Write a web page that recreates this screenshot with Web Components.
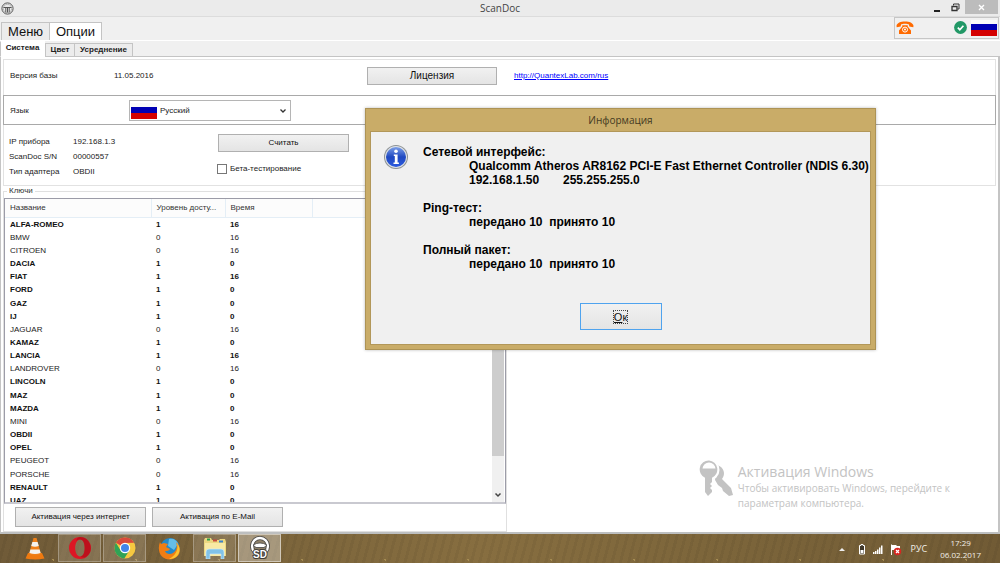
<!DOCTYPE html>
<html lang="ru">
<head>
<meta charset="utf-8">
<title>ScanDoc</title>
<style>
html, body { margin: 0; height: 100%; }
body { font: 8px/10px "Liberation Sans", Arial, sans-serif; color: #222; background: #fff; overflow: hidden; }
</style>
</head>
<body>
<scan-desktop></scan-desktop>
<script>
const UI_FONT = '"Open Sans", "Noto Sans", sans-serif';

function define(name, css, html) {
  const tpl = document.createElement('template');
  tpl.innerHTML = `<style>*{box-sizing:border-box}${css}</style>${html}`;
  customElements.define(name, class extends HTMLElement {
    constructor() {
      super();
      this.attachShadow({ mode: 'open' }).append(tpl.content.cloneNode(true));
    }
  });
}

/* Tricolour flag */
define('ru-flag', `
  :host{display:grid;grid-template-rows:4px 6px 6px;width:26px}
  i:nth-of-type(1){background:#fafafa}
  i:nth-of-type(2){background:#0000b4}
  i:nth-of-type(3){background:#d40000}`,
  `<i></i><i></i><i></i>`);

/* Push button */
define('push-button', `
  :host{display:block;height:18px}
  button{display:block;width:100%;height:100%;padding:0;border:1px solid #b0b0b0;
    background:linear-gradient(#f1f1f1,#e4e4e4);font:inherit;color:#111}
  :host([default]) button{border-color:#4fa3ee}`,
  `<button type="button"><slot></slot></button>`);

/* Window caption */
define('title-bar', `
  :host{display:grid;grid-template-columns:1fr auto 1fr;align-items:center;height:17px;
    background:#ebebeb;border-bottom:1px solid #dcdcdc;font:10px/14px ${UI_FONT};color:#444}
  .logo{display:block;margin-left:1px}
  .ctl{display:flex;justify-content:flex-end;align-self:start;margin-right:2px}
  .ctl button{height:14px;border:0;padding:0;background:none;display:grid;place-items:center}
  .min,.max{width:19px}
  .ctl .close{width:33px;background:#bcbcbc}`,
  `<svg class="logo" width="13" height="13" viewBox="0 0 13 13" fill="none" stroke="#555">
     <circle cx="6.500" cy="6.500" r="5.600" stroke-width="1"/><circle cx="6.500" cy="6.500" r="4.200" stroke="#999" stroke-width=".6"/>
     <path d="M2.500 5.500h8M6.500 5.500v5M4.800 6v4.500M8.200 6v4.500" stroke-width="1"/></svg>
   <slot></slot>
   <div class="ctl">
     <button class="min" aria-label="Свернуть"><svg width="8" height="10"><path d="M1 8h6v2H1z" fill="#222"/></svg></button>
     <button class="max" aria-label="Развернуть"><svg width="9" height="9" fill="none" stroke="#333"><path d="M2.500 2.500V1H8v5H6.500" stroke-width="1"/><path d="M1 3.500h5v4H1z" stroke-width="1.300"/></svg></button>
     <button class="close" aria-label="Закрыть"><svg width="7" height="7"><path d="M1 1l5 5M6 1L1 6" stroke="#fff" stroke-width="1.400"/></svg></button>
   </div>`);

/* Main tabs and connection status */
define('main-toolbar', `
  :host{display:flex;justify-content:space-between;align-items:flex-end;height:24px;
    background:#f0f0f0;border-bottom:1px solid #fff}
  nav{display:flex;margin-left:1px}
  nav button{height:18px;padding:0 5px;border:1px solid #c4c4c4;border-bottom:0;background:#ececec;
    font:13px/16px "Liberation Sans",sans-serif;color:#111;width:49px}
  nav button[aria-selected=true]{background:#fff;width:52px;border-left:0}
  .status{display:flex;align-items:center;align-self:flex-start;width:105px;height:22px;
    border:1px solid #c6c6c6;padding:0 1px 1px;margin-right:1px}
  .ok{margin-left:auto;margin-right:4px}`,
  `<nav role="tablist"><button role="tab">Меню</button><button role="tab" aria-selected="true">Опции</button></nav>
   <div class="status">
     <svg width="18" height="14" viewBox="0 0 18 14" aria-label="Телефон" role="img">
       <path d="M.5 4.800C1 2 4.500.5 9 .5s8 1.500 8.500 4.300l-.2 1.400-4-.6-.3-2.100C11.500 2.600 6.500 2.600 5 3.500l-.3 2.100-4 .6z" fill="#ff6a00"/>
       <path d="M6.300 4.200h5.400v1.300l3.300 4v3.500H3V9.500l3.300-4z" fill="#ff6a00"/>
       <circle cx="9" cy="8.600" r="2.500" fill="none" stroke="#fff" stroke-width="1"/><circle cx="9" cy="8.600" r="1" fill="#fff"/></svg>
     <svg class="ok" width="13" height="13" viewBox="0 0 13 13" aria-label="Готово" role="img"><circle cx="6.500" cy="6.500" r="6.400" fill="#219866"/><path d="M3.800 6.700l2 2 3.600-4" fill="none" stroke="#fff" stroke-width="1.700"/></svg>
     <ru-flag></ru-flag>
   </div>`);

/* Second row of tabs */
define('sub-tabs', `
  :host{display:flex;align-items:flex-end;height:16px;background:#f0f0f0;box-shadow:inset 0 -1px #c4c4c4}
  button{height:14px;border:1px solid #c4c4c4;background:#ececec;padding:0;
    font:bold 8px/10px "Liberation Sans",sans-serif;color:#222}
  .a{width:45px;height:16px;background:#fff;border-color:#fff;border-left-color:#c4c4c4;padding-bottom:2px}
  .b{width:30px;border-left:1px solid #c4c4c4}
  .c{width:58px;border-left:0}`,
  `<button class="a" role="tab" aria-selected="true">Система</button><button class="b" role="tab">Цвет</button><button class="c" role="tab">Усреднение</button>`);

/* Database version row */
define('version-row', `
  :host{display:grid;grid-template-columns:104px 253px 130px auto;align-items:center;height:36px;
    padding:0 0 4px 6px;border:1px solid #e2e2e2;border-bottom:0}
  push-button{font-size:10px}
  a{color:#00f;margin-left:17px}`,
  `<span>Версия базы</span><span>11.05.2016</span><push-button>Лицензия</push-button>
   <a href="http://QuantexLab.com/rus">http://QuantexLab.com/rus</a>`);

/* Language row */
define('language-row', `
  :host{display:grid;grid-template-columns:119px 162px;align-items:center;height:30px;
    padding:1px 0 0 6px;border:1px solid #a9a9a9}
  .box{display:grid;grid-template-columns:2px 26px 1fr 12px;align-items:center;height:21px}
  select{grid-area:1/1/2/5;width:100%;height:100%;appearance:none;border:1px solid #b5b5b5;border-radius:0;
    background:#fff;padding:0 0 0 30px;font:inherit;color:#222}
  ru-flag{grid-area:1/2;pointer-events:none}
  svg{grid-area:1/4;pointer-events:none}`,
  `<label for="lang">Язык</label>
   <div class="box"><select id="lang"><option>Русский</option></select><ru-flag></ru-flag>
     <svg width="8" height="6"><path d="M1.500 1.500L4 4l2.500-2.500" fill="none" stroke="#333" stroke-width="1.300"/></svg></div>`);

/* Device details */
define('device-group', `
  :host{display:flex;height:61px;padding:8px 0 0 5px;border:1px solid #e2e2e2;border-top:0}
  dl{display:grid;grid-template-columns:64px 1fr;grid-auto-rows:15px;width:209px;margin:0}
  dt,dd{margin:0;line-height:18px}
  .side{display:flex;flex-direction:column;gap:12px;width:131px}
  label{display:flex;align-items:center;gap:3px;margin-left:-1px}
  input{appearance:none;width:10px;height:10px;margin:0;border:1px solid #777;background:#fff}
  .side push-button{margin-top:1px}`,
  `<dl><dt>IP прибора</dt><dd>192.168.1.3</dd><dt>ScanDoc S/N</dt><dd>00000557</dd><dt>Тип адаптера</dt><dd>OBDII</dd></dl>
   <div class="side"><push-button>Считать</push-button>
     <label><input type="checkbox">Бета-тестирование</label></div>`);

/* Key list */
const KEYS = [['ALFA-ROMEO',1,16],['BMW',0,16],['CITROEN',0,16],['DACIA',1,0],['FIAT',1,16],['FORD',1,0],
  ['GAZ',1,0],['IJ',1,0],['JAGUAR',0,16],['KAMAZ',1,0],['LANCIA',1,16],['LANDROVER',0,16],['LINCOLN',1,0],
  ['MAZ',1,0],['MAZDA',1,0],['MINI',0,16],['OBDII',1,0],['OPEL',1,0],['PEUGEOT',0,16],['PORSCHE',0,16],
  ['RENAULT',1,0],['UAZ',1,0]];

define('key-list', `
  :host{display:flex;min-height:0;overflow:hidden;border:1px solid #9c9ca8;border-bottom:2px solid #c9c9d0}
  .rows{flex:1;overflow:hidden;contain:size}
  table{width:100%;height:308px;border-collapse:collapse;table-layout:fixed}
  col:nth-child(1){width:146px} col:nth-child(2){width:74px} col:nth-child(3){width:87px}
  th,td{padding:0 0 0 5px;text-align:left;font-weight:normal;white-space:nowrap;overflow:hidden;line-height:13px}
  td{height:13px}
  th{height:18px;background:#fcfcfc;border-right:1px solid #e4eef6;border-bottom:1px solid #e4eef6;text-overflow:ellipsis;color:#333}
  th:last-child{border-right:0}
  tr.on td{font-weight:bold;color:#111}
  .bar{display:flex;flex-direction:column;width:12px;margin-right:1px;background:#f0f0f0}
  .thumb{height:257px;background:#cdcdcd}
  .bar svg{margin:auto 2px 3px}`,
  `<div class="rows"><table><colgroup><col><col><col><col></colgroup>
    <thead><tr><th>Название</th><th>Уровень досту...</th><th>Время</th><th></th></tr></thead>
    <tbody>${KEYS.map(([n, a, t]) => `<tr${a ? ' class="on"' : ''}><td>${n}</td><td>${a}</td><td>${t}</td><td></td></tr>`).join('')}</tbody></table></div>
   <div class="bar"><div class="thumb"></div><svg width="8" height="7"><path d="M1.500 1.500L4 4l2.500-2.500" fill="none" stroke="#444" stroke-width="1.500"/></svg></div>`);

define('keys-group', `
  :host{display:flex;min-height:0}
  fieldset{flex:1;display:flex;flex-direction:column;min-width:0;margin:0;padding:2px 0 4px;border:1px solid #e0e0e0}
  legend{margin-left:3px;padding:0 2px;line-height:10px;color:#333}
  key-list{flex:1}
  .actions{display:flex;gap:6px;padding:3px 0 0 11px}
  .actions push-button{width:131px;height:20px}`,
  `<fieldset><legend>Ключи</legend><key-list></key-list>
    <div class="actions"><push-button>Активация через интернет</push-button><push-button>Активация по E-Mail</push-button></div></fieldset>`);

/* Activation notice */
define('activation-note', `
  :host{display:grid;grid-template-columns:39px auto;font-family:${UI_FONT};color:#c3c3c3}
  h2,p{margin:0;font-weight:normal}
  h2{font-size:14px;line-height:18px}
  p{font-size:10px;line-height:15px}
  svg{margin-top:-4px}`,
  `<svg width="36" height="38" viewBox="0 0 36 38" fill="#c3c3c3">
     <path d="M18 6c7 2 9 9 5 14l9 9 2 7-4 1-6-5-1-3-4-3-3-5z"/>
     <circle cx="10" cy="11" r="10.500" fill="#fff"/>
     <path fill-rule="evenodd" d="M10 1.500a9 9 0 0 0-4 17.200V33l3 4 4-4v-2l-2-2 2-2-2-2 2-2v-4.300A9 9 0 0 0 10 1.500zM10 3.500a6.500 6.500 0 0 1 6.500 6h-13a6.500 6.500 0 0 1 6.500-6z"/></svg>
   <div><h2>Активация Windows</h2><p>Чтобы активировать Windows, перейдите к<br>параметрам компьютера.</p></div>`);

/* Information dialog */
define('info-dialog', `
  :host{display:flex;flex-direction:column;box-sizing:border-box;padding:0 4px 4px;background:#c9ac68;border:1px solid #ad9355;box-shadow:0 0 3px #0004}
  h1{margin:0;font:10px/22px ${UI_FONT};color:#443a22;text-align:center}
  .body{display:flex;flex-direction:column;align-items:center;border:1px solid #b29759;background:#f0f0f0;padding:13px 0 14px 12px}
  .msg{display:grid;grid-template-columns:40px 1fr;width:100%}
  dl{margin:0;font:bold 12px/14px "Liberation Sans",sans-serif;color:#000;white-space:nowrap}
  dd{margin:0 0 0 46px}
  dt:not(:first-child){margin-top:14px}
  .wide{display:grid;grid-template-columns:94px auto}
  .pair{white-space:pre}
  push-button{width:82px;height:27px;margin:32px 12px 0 0;font:11px/14px "Liberation Sans",sans-serif}
  .focus{outline:1px dotted #444}`,
  `<h1>Информация</h1>
   <div class="body"><div class="msg">
     <svg width="26" height="26" viewBox="0 0 26 26"><defs><linearGradient id="g" x2="0" y2="1"><stop stop-color="#7c9fe8"/><stop offset=".5" stop-color="#1f48c0"/><stop offset="1" stop-color="#2c5be0"/></linearGradient></defs>
       <circle cx="13" cy="12" r="12" fill="#8d9296"/><circle cx="13" cy="12" r="11" fill="#dfe3e6"/><circle cx="13" cy="12" r="10" fill="url(#g)"/>
       <circle cx="13" cy="6.300" r="1.800" fill="#fff"/><path d="M10.800 9.500h3.800v8h1.300v1.500h-5.400v-1.500h1.300V11h-1z" fill="#fff"/></svg>
     <dl><dt>Сетевой интерфейс:</dt><dd>Qualcomm Atheros AR8162 PCI-E Fast Ethernet Controller (NDIS 6.30)</dd>
       <dd class="wide"><span>192.168.1.50</span><span>255.255.255.0</span></dd>
       <dt>Ping-тест:</dt><dd class="pair">передано 10  принято 10</dd>
       <dt>Полный пакет:</dt><dd class="pair">передано 10  принято 10</dd></dl></div>
     <push-button default><span class="focus"><u>О</u>к</span></push-button></div>`);

/* Taskbar */
define('task-bar', `
  :host{display:flex;box-sizing:border-box;justify-content:space-between;height:29px;padding:0 19px 0 13px;color:#f2efe8;font:9px/12px ${UI_FONT};
    background:
      radial-gradient(circle,#a58c53 0 1px,#0000 1px) 12px 5px/83px 41px,
      radial-gradient(circle,#9c834c 0 1px,#0000 1px) 37px 13px/127px 47px,
      repeating-linear-gradient(105deg,#0000 0 5px,#0000000c 5px 8px),
      linear-gradient(90deg,#705b38,#7d663c 30%,#876e40 48%,#7d663b 70%,#715b35)}
  nav{display:flex;gap:2px;padding:0 0 1px}
  nav button{width:43px;padding:0;border:1px solid #0000;background:none;display:grid;place-items:center}
  nav .run{background:#fff2;border-color:#fff4}
  nav .act{background:#fff5;border-color:#fff7}
  .tray{display:flex;align-items:center}
  .tray svg{display:block}
  .lang{margin:0 13px 0 9px}
  time{text-align:center;font-size:8px}`,
  `<nav>
    <button aria-label="VLC"><svg width="20" height="23" viewBox="0 0 20 23"><path d="M3 16h14l2.500 5.500q-9.500 2-19 0z" fill="#ef7a10"/><path d="M8.500 1h3L16 17q-6 3-12 0z" fill="#f08018"/><path d="M7.400 5h5.200l1.200 4q-3.800 1.500-7.600 0zM5.400 12.500h9.200l1 3.500q-5.600 2-11.200 0z" fill="#f4f2ee"/></svg></button>
    <button class="run" aria-label="Opera"><svg width="24" height="24" viewBox="0 0 24 24"><path fill-rule="evenodd" fill="#dc1624" d="M12 1a11 11 0 1 0 0 22 11 11 0 0 0 0-22zM12.200 3.500c3 0 4.500 4 4.500 8.500s-1.500 8.500-4.500 8.500-5-4-5-8.500 2-8.500 5-8.500z"/><path d="M12 1a11 11 0 0 1 6 20c-2 1-4 .5-5.800-.5 3 0 4.500-4 4.500-8.500S15.200 3.500 12.200 3.500C10 3.500 9 4 8 5c1-2.500 2-4 4-4z" fill="#a80f18" opacity=".6"/></svg></button>
    <button class="run" aria-label="Chrome"><svg width="22" height="22" viewBox="0 0 22 22"><circle cx="11" cy="11" r="10.500" fill="#f6c840"/><path d="M11 11L1.900 5.800A10.500 10.500 0 0 1 20.100 5.800L11 6z" fill="#d94a3c"/><path d="M11 11l4.300 2.500-5 8A10.500 10.500 0 0 1 1.900 5.800L6.700 13.500z" fill="#30a256"/><circle cx="11" cy="11" r="5.200" fill="#fff"/><circle cx="11" cy="11" r="4" fill="#4285e8"/></svg></button>
    <button aria-label="Firefox"><svg width="23" height="23" viewBox="0 0 23 23"><circle cx="12" cy="10.500" r="9.500" fill="#2389ca"/><path d="M11 2c4-1 8 1 9 5l-4 6-6-4z" fill="#65bde8"/><path d="M2 5l1 2 3-1 4 1-2 3c1 1 3 1 4 2-1 2-3 2-5 2 1 3 5 4 8 2s5-6 3-11c5 4 5 11 1 14.500-4 4-11 4-15 0C.500 16 0 10 2 5z" fill="#f07d14"/><path d="M19 6c4 5 3 11-1 14-2 1.500-5 2-7 2 6-3 10-9 8-16z" fill="#fbc330"/></svg></button>
    <button class="run" aria-label="Проводник"><svg width="24" height="22" viewBox="0 0 24 22"><path d="M1 3l1-2h6l1 2h7l1-1h5l1 3v14H1z" fill="#ecd780"/><path d="M2 6h20v13H2z" fill="#f8e9a4"/><path d="M4 1.500h3v2H4z" fill="#2d9e48"/><path d="M10 2.500h4v2h-4z" fill="#c5483e"/><path d="M16 3.500h4v2h-4z" fill="#3c83cb"/><path d="M3 22v-7q0-3 3-3h12q3 0 3 3v7h-3v-5H7v5z" fill="#81c2e8" stroke="#d5edf8" stroke-width=".6"/></svg></button>
    <button class="act" aria-label="ScanDoc"><svg width="20" height="24" viewBox="0 0 20 24"><circle cx="10" cy="10" r="8" fill="#8d8069" stroke="#444" stroke-width="4"/><circle cx="10" cy="10" r="8" fill="none" stroke="#fff" stroke-width="2.400"/><path d="M3 9q7-4 14 0l-3 2.500H6z" fill="#fff" stroke="#444" stroke-width=".8"/><path d="M3.500 13.500h13V23h-13z" fill="#77694f"/><text x="10" y="22" font-family="Liberation Sans" font-size="10" font-weight="bold" text-anchor="middle" fill="#fff" stroke="#333" stroke-width="1.600" paint-order="stroke">SD</text></svg></button>
   </nav>
   <div class="tray">
    <svg width="52" height="14" viewBox="0 0 52 14"><path d="M1 9l3-3 3 3z" fill="#eee"/>
      <path d="M21.500 3.500h1.500v-1h2v1h1.500v8.500h-5z" fill="#40382a" stroke="#fff" stroke-width="1"/><path d="M22.500 8h3v3h-3z" fill="#fff"/>
      <path d="M35 12v-2h1.500v2zM37 12V9h1.500v3zM39 12V7.500h1.500V12zM41 12V5.500h1.500V12zM43 12V3.500h1.500V12z" fill="#fff"/></svg>
    <svg width="12" height="14" viewBox="0 0 12 14"><path d="M1 2.500h1V13H1zM2 3h4l1 1h3v5H6L5 8H2z" fill="#fff"/><circle cx="7.500" cy="9.500" r="3.700" fill="#d82620"/><path d="M6 8l3 3M9 8l-3 3" stroke="#fff" stroke-width="1.200"/></svg>
    <span class="lang">РУС</span>
    <time datetime="2017-02-06T17:29">17:29<br>06.02.2017</time>
   </div>`);

/* Main window: panels plus what floats over them */
define('scan-window', `
  :host{position:relative;display:flex;flex-direction:column;min-height:0;background:#f0f0f0}
  main{flex:1;min-height:0;display:flex;flex-direction:column;padding:2px 2px 0 2px;background:#fff;
    border:1px solid #c4c4c4;border-top:0;border-bottom:2px solid #bdbfc0;border-right-width:2px}
  .lower{flex:1;min-height:0;display:grid;grid-template:minmax(0,1fr)/504px 1fr}
  info-dialog{position:absolute;left:365px;top:108px;width:511px}
  activation-note{position:absolute;right:50px;bottom:23px}`,
  `<title-bar>ScanDoc</title-bar><main-toolbar></main-toolbar><sub-tabs></sub-tabs>
   <main><version-row></version-row><language-row></language-row><device-group></device-group>
     <div class="lower"><keys-group></keys-group></div></main>
   <activation-note></activation-note><info-dialog></info-dialog>`);

define('scan-desktop', `
  :host{display:flex;flex-direction:column;height:100vh}
  scan-window{flex:1}`,
  `<scan-window></scan-window><task-bar></task-bar>`);
</script>
</body>
</html>
